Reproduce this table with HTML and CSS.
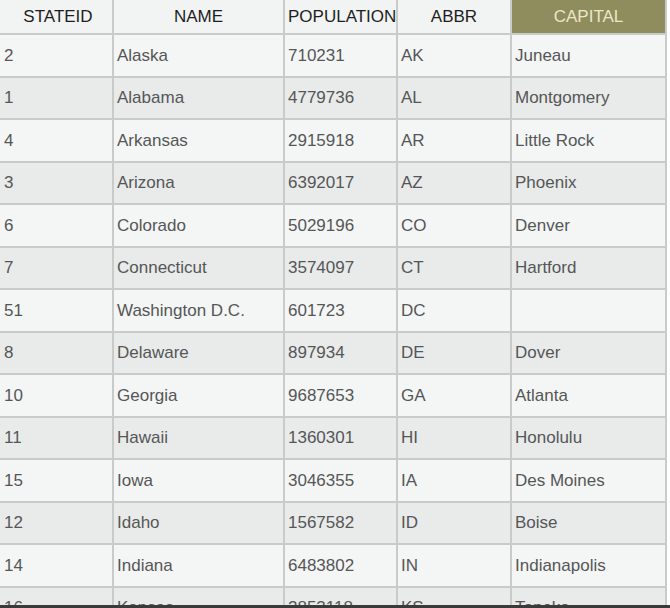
FILE: index.html
```html
<!DOCTYPE html>
<html>
<head>
<meta charset="utf-8">
<link rel="stylesheet" href="styles.css">
</head>
<body>
<table class="grid">
  <colgroup>
    <col class="c1"><col class="c2"><col class="c3"><col class="c4"><col class="c5">
  </colgroup>
  <thead>
    <tr>
      <th>STATEID</th><th>NAME</th><th class="pop">POPULATION</th><th>ABBR</th><th class="active">CAPITAL</th>
    </tr>
  </thead>
  <tbody>
    <tr><td>2</td><td>Alaska</td><td>710231</td><td>AK</td><td>Juneau</td></tr>
    <tr><td>1</td><td>Alabama</td><td>4779736</td><td>AL</td><td>Montgomery</td></tr>
    <tr><td>4</td><td>Arkansas</td><td>2915918</td><td>AR</td><td>Little Rock</td></tr>
    <tr><td>3</td><td>Arizona</td><td>6392017</td><td>AZ</td><td>Phoenix</td></tr>
    <tr><td>6</td><td>Colorado</td><td>5029196</td><td>CO</td><td>Denver</td></tr>
    <tr><td>7</td><td>Connecticut</td><td>3574097</td><td>CT</td><td>Hartford</td></tr>
    <tr><td>51</td><td>Washington D.C.</td><td>601723</td><td>DC</td><td></td></tr>
    <tr><td>8</td><td>Delaware</td><td>897934</td><td>DE</td><td>Dover</td></tr>
    <tr><td>10</td><td>Georgia</td><td>9687653</td><td>GA</td><td>Atlanta</td></tr>
    <tr><td>11</td><td>Hawaii</td><td>1360301</td><td>HI</td><td>Honolulu</td></tr>
    <tr><td>15</td><td>Iowa</td><td>3046355</td><td>IA</td><td>Des Moines</td></tr>
    <tr><td>12</td><td>Idaho</td><td>1567582</td><td>ID</td><td>Boise</td></tr>
    <tr><td>14</td><td>Indiana</td><td>6483802</td><td>IN</td><td>Indianapolis</td></tr>
    <tr><td>16</td><td>Kansas</td><td>2853118</td><td>KS</td><td>Topeka</td></tr>
  </tbody>
</table>
<div class="edge"></div>
</body>
</html>
```
FILE: styles.css
```css
html, body {
  margin: 0;
  padding: 0;
  background: #ffffff;
  overflow: hidden;
  height: 608px;
}
.grid {
  border-collapse: separate;
  border-spacing: 0;
  table-layout: fixed;
  width: 667px;
  font-family: "Liberation Sans", Arial, sans-serif;
  font-size: 17px;
}
.c1 { width: 114px; }
.c2 { width: 171px; }
.c3 { width: 113px; }
.c4 { width: 114px; }
.c5 { width: 155px; }
.grid th, .grid td {
  border-right: 2px solid #c9cbcb;
  border-bottom: 2px solid #c9cbcb;
  padding: 1px 0 0 3px;
  white-space: nowrap;
  overflow: hidden;
}
.grid th:first-child, .grid td:first-child { padding-left: 4px; }
.grid th {
  height: 32px;
  background: #f2f3f3;
  color: #1e1e1e;
  font-weight: normal;
  text-align: center;
  padding: 1px 0 0 0;
}
.grid th.pop { text-align: left; padding-left: 3px; }
.grid th.active {
  background: #8f8c5e;
  color: #ebe7c6;
}
.grid td {
  height: 39.5px;
  color: #555757;
  background: #f4f5f5;
}
.grid tbody tr:nth-child(even) td { background: #e9eaea; }
.edge {
  position: fixed;
  left: 0;
  right: 0;
  bottom: 0;
  height: 3px;
  background: #3a3a3a;
}
```
